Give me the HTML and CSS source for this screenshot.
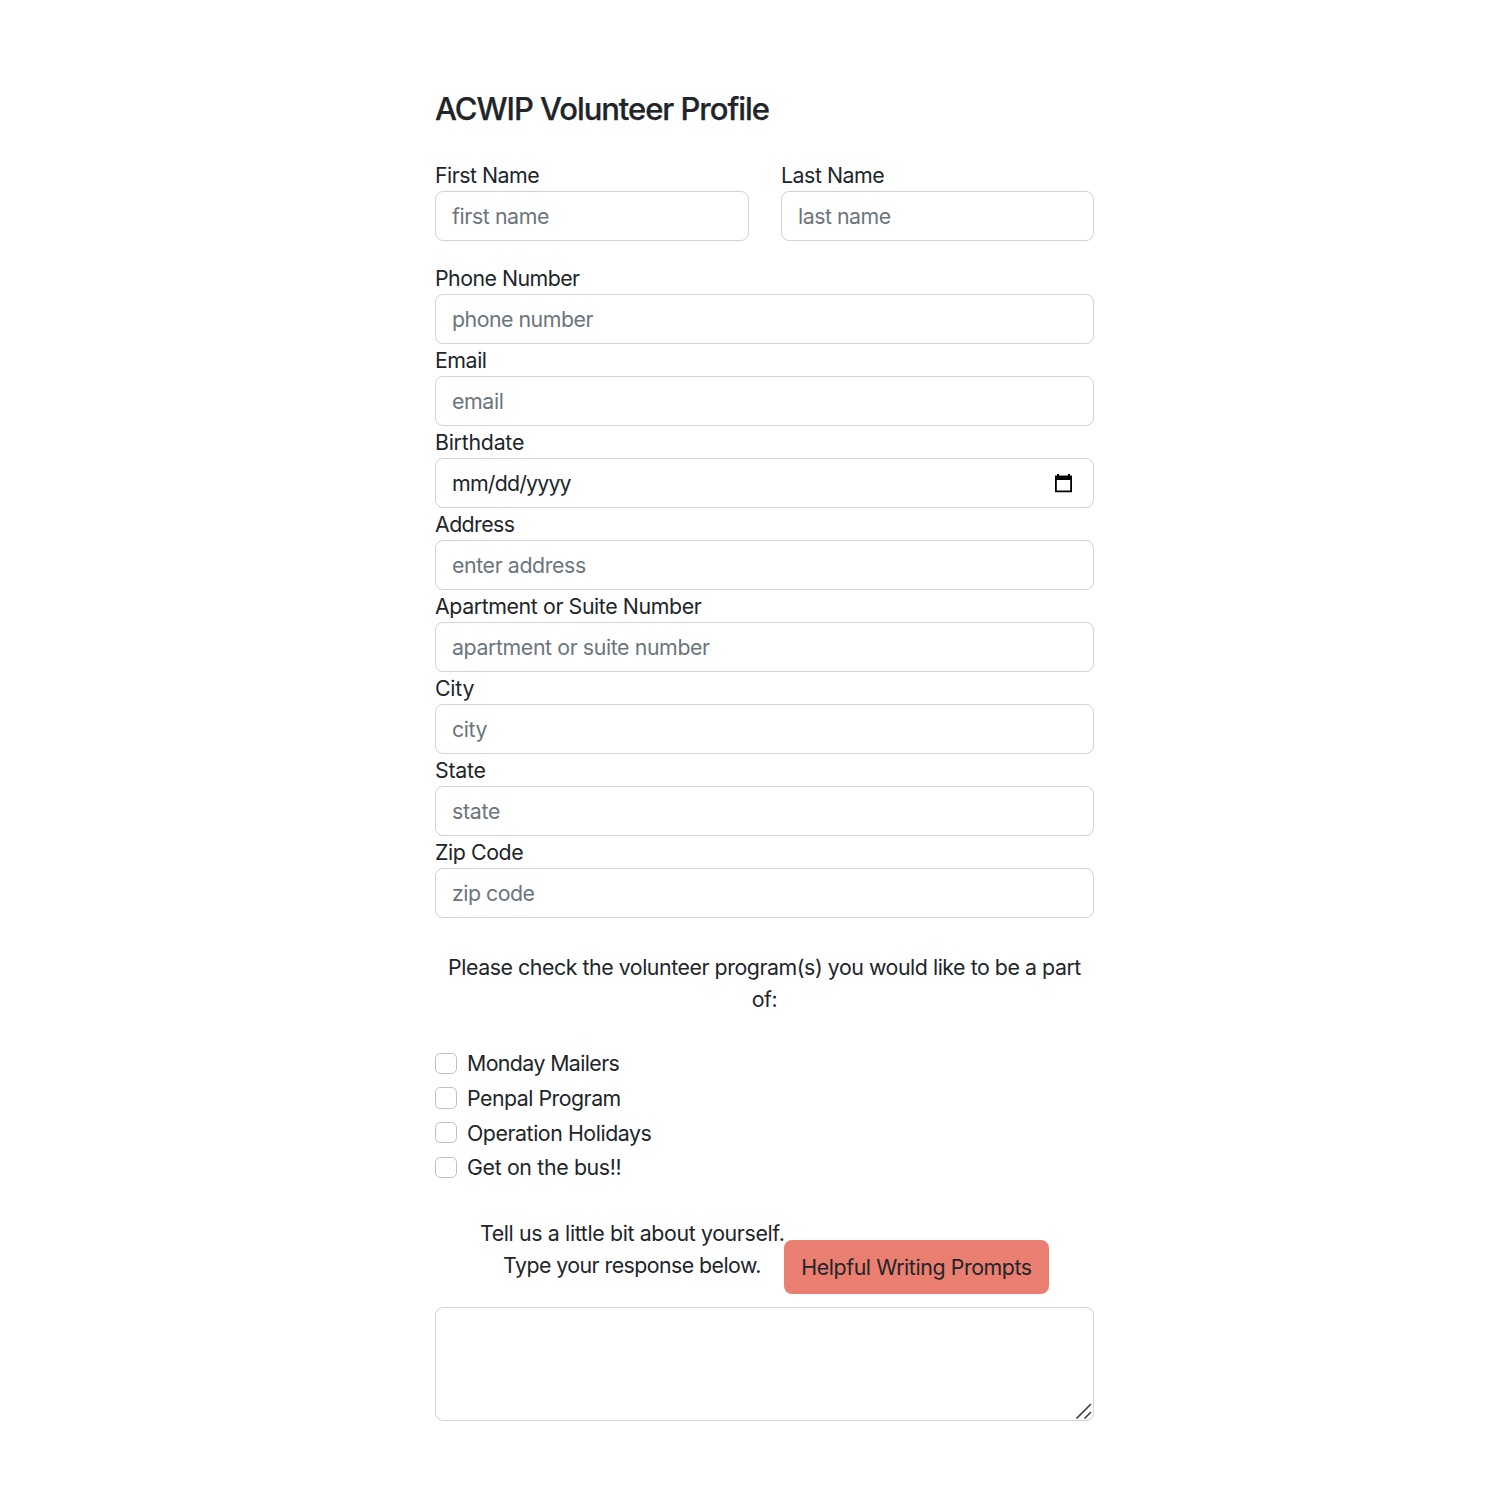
FILE: index.html
```html
<!DOCTYPE html>
<html lang="en">
<head>
<meta charset="utf-8">
<title>ACWIP Volunteer Profile</title>
<link rel="stylesheet" href="styles.css">
</head>
<body>
<form class="profile">
  <h1 class="title"><span class="t-title">ACWIP Volunteer Profile</span></h1>
  <div class="names">
    <div class="field"><label class="label l-first">First Name</label><div class="control"><span class="p-first">first name</span></div></div>
    <div class="field"><label class="label l-last">Last Name</label><div class="control"><span class="p-last">last name</span></div></div>
  </div>
  <div class="field"><label class="label l-phone">Phone Number</label><div class="control"><span class="p-phone">phone number</span></div></div>
  <div class="field"><label class="label l-email">Email</label><div class="control"><span class="p-email">email</span></div></div>
  <div class="field"><label class="label l-birth">Birthdate</label><div class="control date"><span class="p-date">mm/dd/yyyy</span>
    <svg class="calendar" viewBox="0 0 20 20"><path fill-rule="evenodd" d="M1 2.500h2V1h2v1.500h9V1h2v1.500h2V19.300H1zM2.800 7v10.600h13.400V7z"/></svg></div></div>
  <div class="field"><label class="label l-address">Address</label><div class="control"><span class="p-address">enter address</span></div></div>
  <div class="field"><label class="label l-apt">Apartment or Suite Number</label><div class="control"><span class="p-apt">apartment or suite number</span></div></div>
  <div class="field"><label class="label l-city">City</label><div class="control"><span class="p-city">city</span></div></div>
  <div class="field"><label class="label l-state">State</label><div class="control"><span class="p-state">state</span></div></div>
  <div class="field"><label class="label l-zip">Zip Code</label><div class="control"><span class="p-zip">zip code</span></div></div>
  <p class="programs-intro"><span class="t-please">Please check the volunteer program(s) you would like to be a part</span><br>of:</p>
  <div class="programs">
    <label class="check"><span class="box"></span><span class="c-mon">Monday Mailers</span></label>
    <label class="check"><span class="box"></span><span class="c-pen">Penpal Program</span></label>
    <label class="check"><span class="box"></span><span class="c-op">Operation Holidays</span></label>
    <label class="check"><span class="box"></span><span class="c-bus">Get on the bus!!</span></label>
  </div>
  <div class="about">
    <p class="about-text"><span class="t-tell">Tell us a little bit about yourself.</span><br><span class="t-type">Type your response below.</span></p>
    <button class="prompts" type="button"><span class="t-btn">Helpful Writing Prompts</span></button>
  </div>
  <div class="response"><svg class="grip" viewBox="0 0 16 16"><path d="M.5 15.500 15 1M8.500 15.500 15 9"/></svg></div>
</form>
</body>
</html>
```
FILE: styles.css
```css
* { box-sizing: border-box; }
body {
  margin: 0;
  background: #fff;
  color: #212529;
  font: 21.33px/32px Inter, "Liberation Sans", sans-serif;
  letter-spacing: -0.4px;
}
.profile { width: 659px; margin-left: 435px; padding-top: 89px; }
.title { margin: 0 0 31px; font-size: 31px; line-height: 40px; font-weight: 500; -webkit-text-stroke: 0.25px #212529; white-space: nowrap; }
.names { display: grid; grid-template-columns: 314px 313px; gap: 32px; margin-bottom: 21px; }
.label { display: block; height: 32px; white-space: nowrap; }
.names .label { height: 31px; line-height: 30px; }
.field { height: 82px; }
.names .field { height: 81px; }
.control {
  display: flex;
  align-items: center;
  height: 50px;
  padding: 0 16px;
  border: 1px solid #ced4da;
  border-radius: 8px;
  color: #6c757d;
  white-space: nowrap;
}
.date { justify-content: space-between; padding-right: 19px; color: #212529; }
.calendar { width: 20px; height: 20px; fill: #000; }
.programs-intro { margin: 33px 0 0; text-align: center; white-space: nowrap; }
.programs { margin-top: 31.300px; display: grid; grid-auto-rows: 34.67px; }
.check { display: flex; gap: 10px; line-height: 35px; white-space: nowrap; }
.box { width: 22px; height: 21.33px; margin-top: 6.500px; border: 1px solid #bfbfbf; border-radius: 5.300px; }
.about { display: flex; justify-content: center; height: 90px; margin-top: 31.700px; }
.about-text { margin: 0; width: 304px; text-align: center; white-space: nowrap; }
.prompts {
  width: 265px;
  height: 54px;
  margin: 23px 0 0;
  padding: 0;
  border: 0;
  border-radius: 8px;
  background: #ea7f71;
  color: #212529;
  font: inherit;
  white-space: nowrap;
}
.response { display: flex; align-items: flex-end; justify-content: flex-end; height: 114px; border: 1px solid #ced4da; border-radius: 8px; padding: 1px; }
.grip { width: 16px; height: 16px; fill: none; stroke: #444; stroke-width: 1.700; }

/* Tracking for each piece of text */
.t-title { letter-spacing: -1.050px; }
.l-first { letter-spacing: -0.500px; }
.l-last { letter-spacing: -0.470px; }
.l-phone { letter-spacing: -0.530px; }
.l-email { letter-spacing: -0.450px; }
.l-birth { letter-spacing: -0.250px; }
.l-address { letter-spacing: -0.580px; }
.l-city, .l-state, .p-state { letter-spacing: -0.250px; }
.p-last, .p-phone, .p-zip { letter-spacing: -0.500px; }
.p-date { letter-spacing: -0.800px; }
.t-please { letter-spacing: -0.450px; }
.c-mon { letter-spacing: -0.600px; }
.c-pen { letter-spacing: -0.500px; }
.c-op { letter-spacing: -0.440px; }
.c-bus { letter-spacing: -0.350px; }
.t-tell { letter-spacing: -0.360px; }
.t-type { letter-spacing: -0.550px; }
.t-btn { letter-spacing: -0.400px; }
```
